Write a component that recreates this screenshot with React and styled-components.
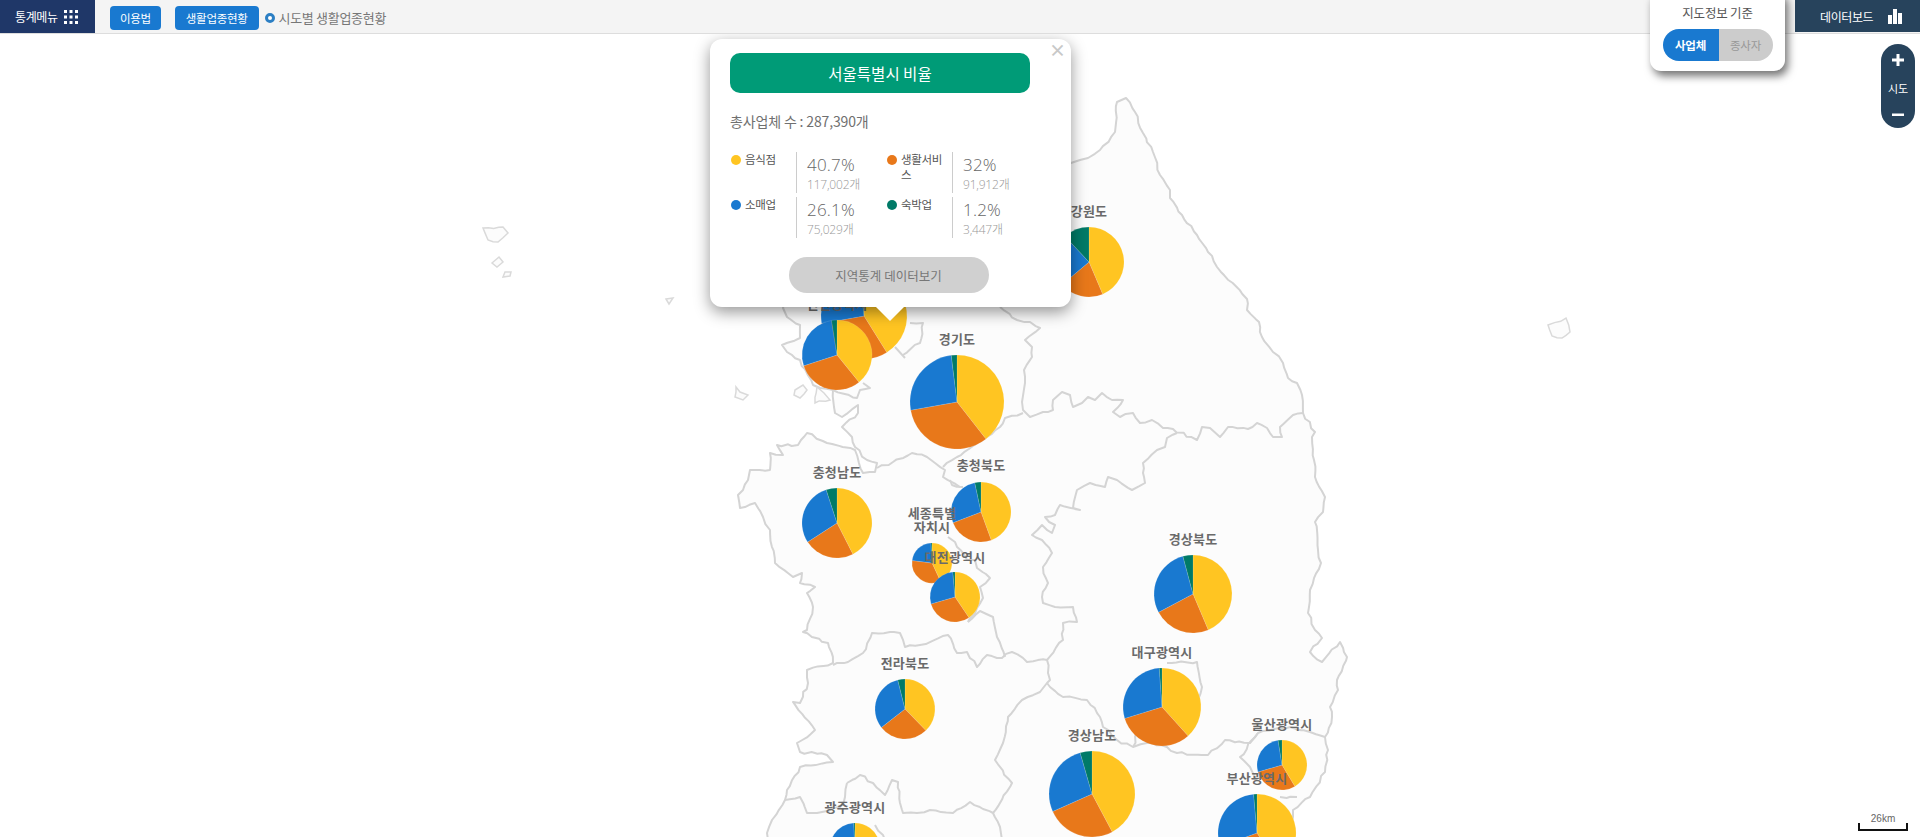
import styled, { createGlobalStyle } from 'styled-components';

const KR = `"Noto Sans CJK KR", "Noto Sans", sans-serif`;
const NAVY = '#27435c';
const BLUE = '#1979d0';
const COLORS = ['#ffc522', '#e8781a', '#1979d0', '#007a67'];

const GlobalStyle = createGlobalStyle`
  html, body {
    margin: 0;
    height: 100%;
    background: #fff;
    font-family: ${KR};
    overflow: hidden;
  }
  * { box-sizing: border-box; }
`;

const Page = styled.div`
  position: relative;
  width: 100%;
  height: 100vh;
  overflow: hidden;
`;

const TopBar = styled.header`
  position: relative;
  z-index: 3;
  height: 34px;
  background: #f4f4f4;
  border-bottom: 1px solid #ddd;
  display: flex;
  align-items: stretch;
`;

const MenuButton = styled.div`
  width: 95px;
  height: 33px;
  background: #1f3768;
  color: #fff;
  font-size: 12px;
  letter-spacing: -0.4px;
  display: flex;
  align-items: center;
  gap: 6px;
  padding-left: 15px;
`;

const Crumbs = styled.div`
  display: flex;
  align-items: center;
  height: 33px;
  padding-left: 15px;
  padding-top: 2px;
`;

const BlueButton = styled.div`
  height: 24px;
  padding: 0 ${({ $wide }) => ($wide ? '11px' : '10px')};
  margin-right: ${({ $wide }) => ($wide ? '6px' : '14px')};
  border-radius: 4px;
  background: ${BLUE};
  color: #fff;
  font-size: 11.5px;
  letter-spacing: -0.3px;
  display: flex;
  align-items: center;
`;

const Bullet = styled.span`
  width: 10px;
  height: 10px;
  border-radius: 50%;
  border: 3px solid #2c7fc4;
  background: #fff;
  margin-right: 4px;
`;

const CrumbText = styled.span`
  color: #777;
  font-size: 13px;
  letter-spacing: -0.3px;
`;

const Dashboard = styled.div`
  margin-left: auto;
  width: 125px;
  height: 32px;
  background: ${NAVY};
  color: #fff;
  font-size: 12px;
  letter-spacing: -0.4px;
  display: flex;
  align-items: center;
  gap: 15px;
  padding-left: 25px;
`;

const MapSvg = styled.svg`
  position: absolute;
  left: 0;
  top: 0;
  width: 1920px;
  height: 837px;
`;

const PieBox = styled.svg`
  position: absolute;
  overflow: visible;
`;

const PieLabel = styled.div`
  position: absolute;
  width: 80px;
  transform: translate(-50%, -50%);
  text-align: center;
  color: #6a6a6a;
  font-size: 13px;
  font-weight: 700;
  line-height: 14px;
  letter-spacing: 0.2px;
`;

const Popup = styled.div`
  position: absolute;
  z-index: 2;
  left: 710px;
  top: 39px;
  width: 361px;
  height: 268px;
  background: #fff;
  border-radius: 12px;
  box-shadow: 0 5px 16px rgba(0, 0, 0, 0.42);
  padding: 14px 20px 0;
  &::after {
    content: '';
    position: absolute;
    left: 166px;
    top: 268px;
    border-left: 14px solid transparent;
    border-right: 14px solid transparent;
    border-top: 14px solid #fff;
  }
`;

const CloseMark = styled.div`
  position: absolute;
  right: 5px;
  top: 1px;
  color: #c8c8c8;
  font-size: 17px;
  font-weight: 700;
  line-height: 20px;
`;

const PopupTitle = styled.div`
  width: 300px;
  height: 40px;
  border-radius: 10px;
  background: #009b77;
  color: #fff;
  font-size: 15.5px;
  display: flex;
  align-items: center;
  justify-content: center;
`;

const Summary = styled.div`
  margin-top: 18px;
  height: 20px;
  color: #707070;
  font-size: 14px;
  line-height: 20px;
  letter-spacing: -0.15px;
`;

const Legend = styled.div`
  margin: 21px 0 0 1px;
  display: grid;
  grid-template-columns: 156px 156px;
  grid-auto-rows: 41px;
  row-gap: 4px;
`;

const LegendItem = styled.div`
  display: flex;
`;

const LegendName = styled.div`
  width: 65px;
  display: flex;
  gap: 4px;
  color: #555;
  font-size: 11.5px;
  line-height: 15px;
  letter-spacing: -0.3px;
`;

const Dot = styled.span`
  flex: none;
  width: 10px;
  height: 10px;
  margin-top: 3px;
  border-radius: 50%;
  background: ${({ $color }) => $color};
`;

const LegendValue = styled.div`
  border-left: 1px solid #ccc;
  padding-left: 10px;
  white-space: nowrap;
  font-family: "Open Sans", sans-serif;
`;

const Percent = styled.div`
  color: #666;
  font-size: 17px;
  font-weight: 300;
  letter-spacing: 0.2px;
  line-height: 22px;
  margin-top: 2px;
`;

const Count = styled.div`
  color: #999;
  font-size: 12px;
  font-weight: 300;
  line-height: 16px;
  letter-spacing: -0.2px;
  span { font-family: ${KR}; }
`;

const PopupButton = styled.div`
  width: 200px;
  height: 36px;
  margin: 19px auto 0;
  transform: translateX(-2px);
  border-radius: 18px;
  background: #d0d0d0;
  color: #777;
  font-size: 12.5px;
  display: flex;
  align-items: center;
  justify-content: center;
`;

const InfoPanel = styled.div`
  position: absolute;
  z-index: 4;
  left: 1650px;
  top: -10px;
  width: 135px;
  height: 81px;
  background: #fff;
  border-radius: 11px;
  box-shadow: 3px 5px 8px rgba(0, 0, 0, 0.55);
  padding-top: 14px;
  text-align: center;
`;

const InfoTitle = styled.div`
  color: #555;
  font-size: 12.5px;
  line-height: 18px;
  letter-spacing: -0.2px;
`;

const Toggle = styled.div`
  display: flex;
  width: 110px;
  height: 32px;
  margin: 7px auto 0;
  border-radius: 16px;
  overflow: hidden;
  font-size: 11.5px;
  letter-spacing: -0.3px;
`;

const ToggleOption = styled.div`
  width: ${({ $active }) => ($active ? '56px' : '54px')};
  background: ${({ $active }) => ($active ? BLUE : '#ccc')};
  color: ${({ $active }) => ($active ? '#fff' : '#999')};
  font-weight: ${({ $active }) => ($active ? 700 : 400)};
  display: flex;
  align-items: center;
  justify-content: center;
`;

const ZoomControl = styled.div`
  position: absolute;
  z-index: 2;
  left: 1881px;
  top: 44px;
  width: 34px;
  height: 84px;
  border-radius: 17px;
  background: ${NAVY};
  color: #fff;
  display: flex;
  flex-direction: column;
  align-items: center;
  justify-content: space-between;
  padding: 10px 0 7px;
`;

const ZoomLabel = styled.div`
  font-size: 11px;
  line-height: 14px;
`;

const ScaleBar = styled.div`
  position: absolute;
  left: 1858px;
  top: 813px;
  width: 50px;
  height: 18px;
  border: 2px solid #111;
  border-top: 0;
  border-image: linear-gradient(to bottom, transparent 11px, #111 11px) 2;
  color: #666;
  font-family: "Liberation Sans", sans-serif;
  font-size: 10px;
  line-height: 12px;
  text-align: center;
`;

// outlines traced off the reference, in page pixels
const MAINLAND = [
  [783, 308], [800, 200], [900, 100], [1071, 163], [1080, 160], [1088, 158], [1100, 150], [1115, 132], [1117, 102],
  [1126, 98], [1135, 112], [1143, 133], [1153, 152], [1160, 175], [1170, 190], [1170, 198], [1182, 215], [1197, 235],
  [1208, 252], [1217, 267], [1247, 299], [1247, 310], [1259, 322], [1262, 337], [1273, 352], [1283, 363], [1288, 378],
  [1297, 383], [1302, 395], [1303, 413], [1315, 432], [1312, 437], [1314, 460], [1315, 477], [1325, 497], [1323, 512],
  [1315, 522], [1318, 550], [1321, 563], [1310, 590], [1308, 613], [1315, 630], [1322, 638], [1310, 652], [1322, 662],
  [1340, 642], [1347, 657], [1337, 680], [1338, 690], [1330, 707], [1332, 717], [1325, 737], [1328, 750], [1325, 772],
  [1310, 797], [1293, 810], [1293, 817], [1290, 840], [768, 840], [767, 833], [772, 820], [785, 800], [787, 790],
  [800, 767], [833, 762], [827, 755], [800, 752], [797, 743], [815, 730], [793, 702], [800, 703], [808, 683], [807, 670],
  [833, 663], [828, 643], [803, 632], [807, 630], [813, 607], [807, 593], [815, 587], [800, 583], [802, 573], [793, 577],
  [775, 563], [770, 530], [763, 517], [755, 503], [740, 508], [738, 495], [743, 490], [748, 480], [750, 470], [770, 470],
  [770, 453], [783, 455], [777, 445], [798, 445], [807, 433], [827, 443], [855, 450], [863, 473], [875, 472], [877, 463],
  [867, 460], [855, 447], [852, 437], [842, 427], [858, 413], [858, 405], [842, 417], [835, 413], [833, 390], [820, 388],
  [813, 385], [800, 360], [787, 352], [782, 345], [800, 338], [800, 325], [787, 317],
];

const BORDERS = [
  // gyeonggi / gangwon
  [[1000, 307], [1017, 320], [1030, 322], [1040, 328], [1025, 340], [1032, 347], [1032, 357], [1024, 370], [1025, 383],
    [1022, 402], [1023, 410], [1030, 417], [1043, 412], [1053, 410], [1053, 400], [1062, 392], [1070, 395], [1073, 407],
    [1082, 403], [1088, 397], [1095, 400], [1102, 393], [1112, 400], [1123, 400], [1113, 412], [1120, 417], [1133, 413],
    [1140, 423], [1152, 420], [1163, 428], [1173, 429], [1197, 440], [1202, 427], [1210, 428], [1220, 437], [1228, 427],
    [1248, 429], [1257, 423], [1267, 428], [1273, 437], [1282, 437], [1280, 427], [1293, 415], [1303, 413]],
  // chungbuk / gyeongbuk
  [[1177, 433], [1167, 438], [1165, 447], [1157, 450], [1143, 463], [1143, 473], [1145, 483], [1132, 490], [1117, 480],
    [1108, 477], [1105, 487], [1090, 483], [1077, 490], [1073, 508], [1080, 510], [1060, 505], [1055, 515], [1045, 517],
    [1055, 525], [1052, 533], [1042, 525], [1032, 535], [1042, 540], [1052, 553], [1043, 567], [1048, 583], [1042, 597],
    [1043, 603], [1055, 607], [1073, 607], [1077, 622], [1063, 623], [1063, 640], [1047, 660]],
  // jeonbuk north edge
  [[833, 665], [848, 662], [863, 653], [872, 633], [900, 633], [905, 647], [920, 645], [948, 635], [957, 653], [967, 652],
    [977, 667], [987, 655], [1002, 658], [1012, 652], [1027, 662], [1047, 660], [1048, 673], [1050, 680], [1047, 683],
    [1040, 692], [1022, 700], [1008, 717], [1003, 743], [995, 760], [1012, 783], [993, 813], [1000, 827], [1002, 840]],
  // chungbuk / jeonbuk, daejeon edge
  [[1005, 657], [997, 637], [993, 617], [980, 611], [968, 622]],
  [[877, 468], [893, 462], [912, 453], [927, 457], [945, 470], [943, 477], [960, 487]],
  [[943, 467], [957, 457], [987, 437], [1000, 427], [1005, 418], [1023, 413]],
  [[950, 480], [952, 485], [963, 487]],
  [[948, 537], [955, 542], [967, 560], [975, 560], [977, 568], [990, 578], [980, 587], [983, 598], [977, 608], [968, 622]],
  // gyeongnam / gyeongbuk
  [[1047, 683], [1063, 697], [1087, 700], [1100, 717], [1103, 727], [1117, 740], [1133, 747], [1147, 743], [1167, 747],
    [1177, 753], [1208, 755], [1225, 740], [1250, 743], [1258, 733], [1290, 727], [1310, 732], [1325, 737]],
  [[1258, 733], [1240, 757], [1250, 767], [1257, 780]],
  [[1280, 797], [1297, 797]],
  // daegu loop
  [[1133, 747], [1147, 700]],
  [[1167, 663], [1197, 662], [1202, 687], [1198, 700]],
  // gwangju and jeonnam
  [[847, 783], [860, 775], [873, 783], [885, 795], [892, 780], [898, 782], [900, 803], [903, 813], [917, 813], [930, 810],
    [953, 813], [970, 802], [993, 813]],
  [[847, 783], [845, 797], [840, 807], [817, 813], [807, 813], [800, 797], [785, 800]],
  [[875, 825], [883, 835], [885, 840]],
  // islets and inner coast near incheon
  [[863, 383], [870, 388], [860, 390], [857, 398], [833, 390]],
  [[903, 355], [920, 343], [923, 323], [910, 323]],
  [[905, 358], [895, 347]],
];

const ISLANDS = [
  [[483, 228], [503, 227], [508, 233], [498, 242], [488, 240]],
  [[492, 263], [499, 257], [503, 262], [497, 267]],
  [[503, 277], [505, 272], [511, 272], [510, 276]],
  [[666, 299], [673, 298], [669, 304]],
  [[736, 387], [740, 392], [748, 395], [743, 400], [735, 397]],
  [[795, 390], [803, 385], [807, 390], [800, 398], [794, 395]],
  [[817, 387], [815, 403], [830, 400], [824, 393]],
  [[1548, 325], [1566, 318], [1570, 332], [1562, 338], [1552, 336]],
];

// small seeded wobble so the borders read like a coastline and not straight cuts
function roughen(points, closed) {
  let seed = points.length * 7 + 3;
  const wobble = () => {
    seed = (seed * 9301 + 49297) % 233280;
    return (seed / 233280 - 0.5) * 2.4;
  };
  const out = [];
  const list = closed ? [...points, points[0]] : points;
  list.forEach((p, i) => {
    if (i > 0) {
      const q = list[i - 1];
      const steps = Math.floor(Math.hypot(p[0] - q[0], p[1] - q[1]) / 5);
      for (let s = 1; s < steps; s++) {
        const t = s / steps;
        out.push([q[0] + (p[0] - q[0]) * t + wobble(), q[1] + (p[1] - q[1]) * t + wobble()]);
      }
    }
    out.push(p);
  });
  return out.map((p) => `${p[0].toFixed(1)},${p[1].toFixed(1)}`).join(' ');
}

const PIES = [
  { name: '서울특별시', x: 864, y: 316, r: 43, cuts: [148, 260, 355] },
  { name: '인천광역시', x: 837, y: 355, r: 35, cuts: [141, 252, 351], labelY: 304 },
  { name: '강원도', x: 1089, y: 262, r: 35, cuts: [157, 230, 317], labelY: 211 },
  { name: '경기도', x: 957, y: 402, r: 47, cuts: [142, 260, 353], labelY: 339 },
  { name: '충청남도', x: 837, y: 523, r: 35, cuts: [153, 237, 342], labelY: 472 },
  { name: '충청북도', x: 981, y: 512, r: 30, cuts: [160, 249, 348], labelY: 465 },
  { name: '세종특별\n자치시', x: 932, y: 563, r: 20, cuts: [155, 277, 357], labelY: 520 },
  { name: '대전광역시', x: 955, y: 597, r: 25, cuts: [146, 254, 355], labelY: 557 },
  { name: '경상북도', x: 1193, y: 594, r: 39, cuts: [157, 242, 345], labelY: 539 },
  { name: '대구광역시', x: 1162, y: 707, r: 39, cuts: [138, 253, 356], labelY: 652 },
  { name: '전라북도', x: 905, y: 709, r: 30, cuts: [136, 232, 346], labelY: 663 },
  { name: '경상남도', x: 1092, y: 794, r: 43, cuts: [152, 246, 344], labelY: 735 },
  { name: '울산광역시', x: 1282, y: 765, r: 25, cuts: [149, 254, 351], labelY: 724 },
  { name: '부산광역시', x: 1257, y: 833, r: 39, cuts: [147, 250, 355], labelY: 778 },
  { name: '광주광역시', x: 855, y: 848, r: 25, cuts: [145, 250, 357], labelY: 807 },
];

const LEGEND = [
  { name: '음식점', pct: '40.7%', count: '117,002', color: COLORS[0] },
  { name: '생활서비스', pct: '32%', count: '91,912', color: COLORS[1] },
  { name: '소매업', pct: '26.1%', count: '75,029', color: COLORS[2] },
  { name: '숙박업', pct: '1.2%', count: '3,447', color: COLORS[3] },
];

function wedge(r, from, to) {
  const point = (deg) => {
    const a = (deg * Math.PI) / 180;
    return `${(r + r * Math.sin(a)).toFixed(2)} ${(r - r * Math.cos(a)).toFixed(2)}`;
  };
  return `M${r} ${r}L${point(from)}A${r} ${r} 0 ${to - from > 180 ? 1 : 0} 1 ${point(to)}Z`;
}

function Pie({ x, y, r, cuts }) {
  const edges = [0, ...cuts, 360];
  return (
    <PieBox width={r * 2} height={r * 2} style={{ left: x - r, top: y - r }}>
      {COLORS.map((color, i) => (
        <path key={color} d={wedge(r, edges[i], edges[i + 1])} fill={color} stroke="#fff" strokeOpacity="0.25" strokeWidth="0.5" />
      ))}
    </PieBox>
  );
}

function GridIcon() {
  const cells = [];
  for (let row = 0; row < 3; row++) {
    for (let col = 0; col < 3; col++) {
      cells.push(<rect key={`${row}${col}`} x={col * 5.5} y={row * 5.5} width="3" height="3" fill="#fff" />);
    }
  }
  return (
    <svg width="14" height="14" viewBox="0 0 14 14">{cells}</svg>
  );
}

function BarsIcon() {
  return (
    <svg width="14" height="15" viewBox="0 0 14 15" fill="#fff">
      <rect x="0" y="6" width="4" height="9" />
      <rect x="5" y="0" width="4" height="15" />
      <rect x="10" y="4" width="4" height="11" />
    </svg>
  );
}

function App() {
  return (
    <Page>
      <GlobalStyle />
      <MapSvg viewBox="0 0 1920 837">
        <polygon points={roughen(MAINLAND, true)} fill="#fcfcfc" stroke="#d4d4d4" strokeWidth="2" strokeLinejoin="round" />
        {ISLANDS.map((shape, i) => (
          <polygon key={i} points={roughen(shape, true)} fill="#fcfcfc" stroke="#dadada" strokeWidth="1.5" />
        ))}
        {BORDERS.map((line, i) => (
          <polyline key={i} points={roughen(line)} fill="none" stroke="#d4d4d4" strokeWidth="2" strokeLinejoin="round" />
        ))}
      </MapSvg>

      {PIES.map((pie) => <Pie key={pie.name} {...pie} />)}
      {PIES.filter((pie) => pie.labelY).map((pie) => (
        <PieLabel key={pie.name} style={{ left: pie.x, top: pie.labelY }}>
          {pie.name.split('\n').map((line) => <div key={line}>{line}</div>)}
        </PieLabel>
      ))}

      <TopBar>
        <MenuButton>통계메뉴 <GridIcon /></MenuButton>
        <Crumbs>
          <BlueButton>이용법</BlueButton>
          <BlueButton $wide>생활업종현황</BlueButton>
          <Bullet />
          <CrumbText>시도별 생활업종현황</CrumbText>
        </Crumbs>
        <Dashboard>데이터보드 <BarsIcon /></Dashboard>
      </TopBar>

      <InfoPanel>
        <InfoTitle>지도정보 기준</InfoTitle>
        <Toggle>
          <ToggleOption $active>사업체</ToggleOption>
          <ToggleOption>종사자</ToggleOption>
        </Toggle>
      </InfoPanel>

      <ZoomControl>
        <svg width="12" height="12" viewBox="0 0 12 12" fill="#fff">
          <rect x="0" y="4.5" width="12" height="3" /><rect x="4.5" y="0" width="3" height="12" />
        </svg>
        <ZoomLabel>시도</ZoomLabel>
        <svg width="12" height="12" viewBox="0 0 12 12" fill="#fff">
          <rect x="0" y="4.5" width="12" height="2.5" />
        </svg>
      </ZoomControl>

      <ScaleBar>26km</ScaleBar>

      <Popup>
        <CloseMark>×</CloseMark>
        <PopupTitle>서울특별시 비율</PopupTitle>
        <Summary>총사업체 수 : 287,390개</Summary>
        <Legend>
          {LEGEND.map((item) => (
            <LegendItem key={item.name}>
              <LegendName><Dot $color={item.color} /><span>{item.name}</span></LegendName>
              <LegendValue>
                <Percent>{item.pct}</Percent>
                <Count>{item.count}<span>개</span></Count>
              </LegendValue>
            </LegendItem>
          ))}
        </Legend>
        <PopupButton>지역통계 데이터보기</PopupButton>
      </Popup>
    </Page>
  );
}

export default App;
